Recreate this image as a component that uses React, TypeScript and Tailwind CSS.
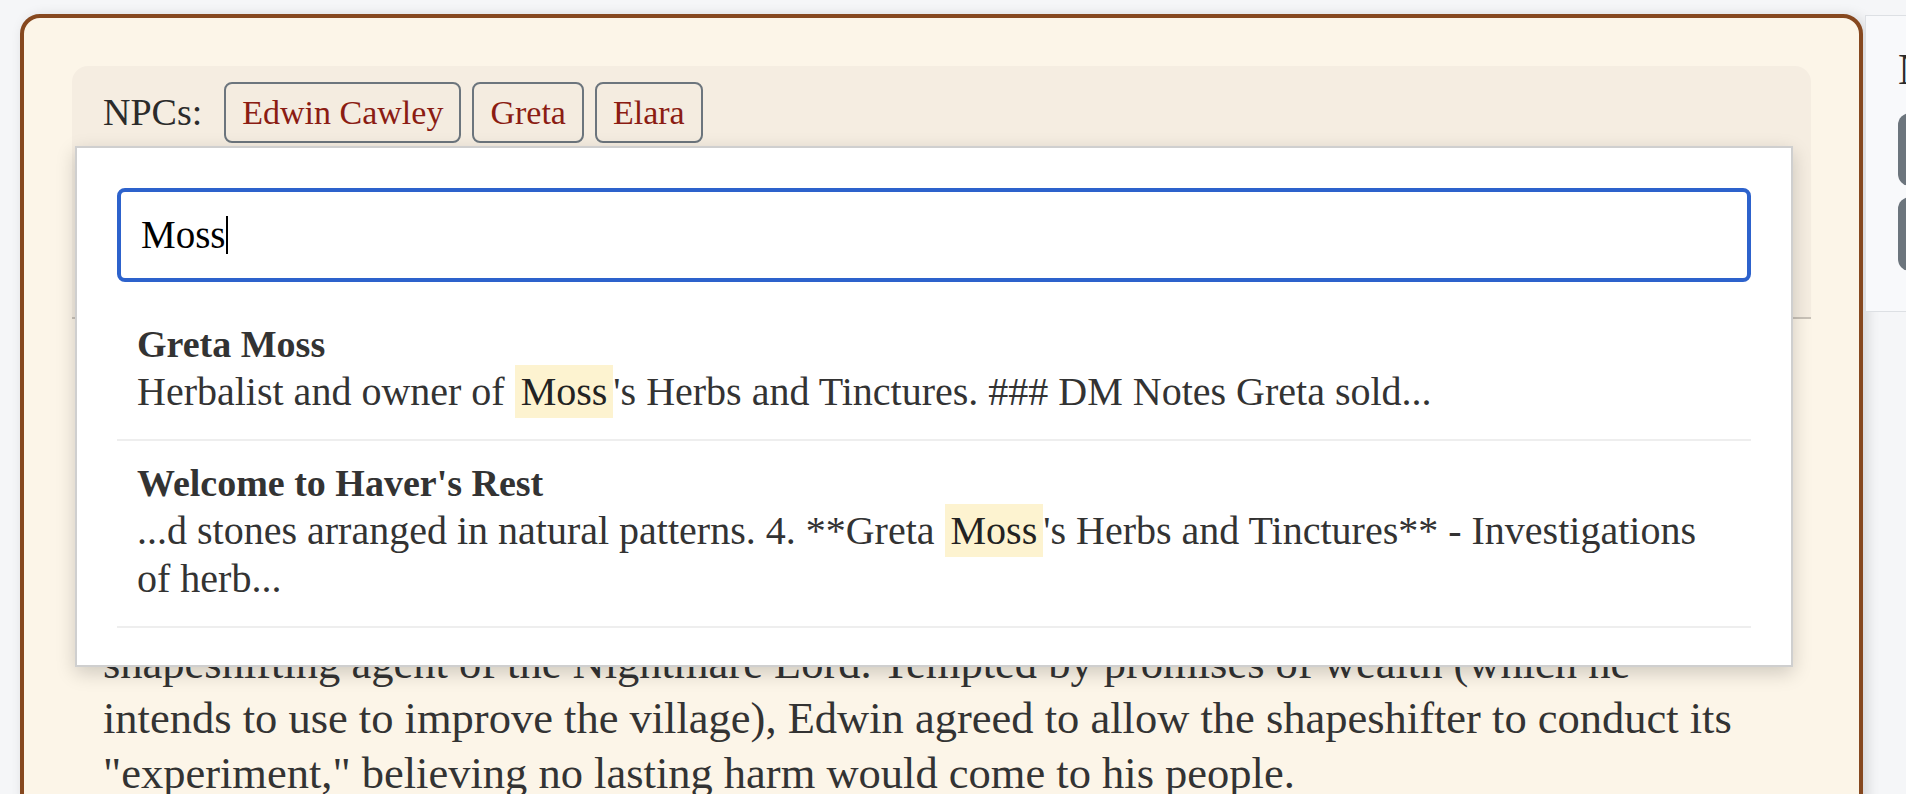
import React from 'react';

interface SearchResult {
  title: string;
  before: string;
  match: string;
  after: string;
}

const npcs = ['Edwin Cawley', 'Greta', 'Elara'];
const locations = ["Haver's Rest", 'The Old Mill', 'Standing Stones'];

const results: SearchResult[] = [
  {
    title: 'Greta Moss',
    before: 'Herbalist and owner of ',
    match: 'Moss',
    after: "'s Herbs and Tinctures. ### DM Notes Greta sold...",
  },
  {
    title: "Welcome to Haver's Rest",
    before: '...d stones arranged in natural patterns. 4. **Greta ',
    match: 'Moss',
    after: "'s Herbs and Tinctures** - Investigations of herb...",
  },
];

function TagButton({ label }: { label: string }) {
  return (
    <button className="h-[61px] rounded-[8px] border-2 border-[#6c757d] bg-[#f4ece0] px-[16px] text-[34px] text-[#8b1c13]">
      {label}
    </button>
  );
}

function SearchDropdown() {
  return (
    <div className="absolute left-[3px] right-[18px] top-[80px] z-10 border-2 border-[#cfcfcf] bg-white px-[40px] pt-[40px] pb-[37px] shadow-[0_6px_18px_rgba(0,0,0,0.18)]">
      {/* search box */}
      <div className="mb-[20px] flex h-[94px] items-center rounded-[8px] border-4 border-[#2d62cc] px-[20px] font-['Liberation_Serif','Times_New_Roman',serif] text-[39px] text-black">
        <span>Moss</span>
        <span className="inline-block h-[38px] w-[2px] bg-black" />
      </div>

      {results.map((r) => (
        <div key={r.title} className="border-b-2 border-[#eeeeee] px-[20px] pt-[18px] pb-[23px] text-[#333333]">
          <div className="text-[38px] leading-[48px] font-bold">{r.title}</div>
          <div className="text-[40px] leading-[48px]">
            {r.before}
            <mark className="bg-[#fdf3d0] px-[6px] py-[4px] text-[#222222]">{r.match}</mark>
            {r.after}
          </div>
        </div>
      ))}
    </div>
  );
}

export default function App() {
  return (
    <div className="h-[794px] w-[1906px] overflow-hidden bg-[#f5f6f8] font-['Liberation_Serif','Times_New_Roman',serif]">
      <div className="flex items-start gap-[2px] pl-[20px] pt-[14px]">
        {/* Main note card */}
        <div className="w-[1843px] shrink-0 rounded-[20px] border-4 border-[#86481f] bg-[#fcf5e8] p-12 shadow-[4px_2px_14px_rgba(0,0,0,0.14)]">
          {/* Links panel */}
          <div className="relative h-[253px] rounded-t-[16px] border-b-2 border-[#c9c2b8] bg-[#f5ede1] px-[31px] pt-[16px]">
            <div className="flex items-center gap-[11px]">
              <span className="mr-[11px] text-[38px] text-[#2b2b2b]">NPCs:</span>
              {npcs.map((n) => (
                <TagButton key={n} label={n} />
              ))}
            </div>
            <div className="mt-[16px] flex items-center gap-[11px]">
              <span className="mr-[11px] text-[38px] text-[#2b2b2b]">Locations:</span>
              {locations.map((l) => (
                <TagButton key={l} label={l} />
              ))}
            </div>

            <SearchDropdown />
          </div>

          {/* Note body */}
          <div className="px-[31px] pt-[30px] text-[#333333]">
            <h3 className="mb-[56px] text-[52px] leading-[66px] font-bold">Edwin Cawley</h3>
            <p className="text-[44.5px] leading-[55px]">
              Edwin Cawley has served as mayor of Haver's Rest for nearly twenty years.
              <br />
              He is well liked, if somewhat vain, and proud of his village's prosperity.
              <br />
              Some months ago he was approached in secret by a stranger, in truth a
              <br />
              shapeshifting agent of the Nightmare Lord. Tempted by promises of wealth (which he
              <br />
              intends to use to improve the village), Edwin agreed to allow the shapeshifter to conduct its
              <br />
              "experiment," believing no lasting harm would come to his people.
            </p>
            <p className="mt-[30px] text-[44.5px] leading-[55px]">
              He now lives in quiet fear of what he has set in motion.
            </p>
          </div>
        </div>

        {/* Sidebar */}
        <div className="mt-[1px] h-[297px] w-[360px] shrink-0 border border-[#dde0e4] bg-[#f8f9fb] pl-[32px] pt-[27px]">
          <h4 className="mb-[17px] text-[44px] leading-[53px] text-[#2b2b2b]">Notes</h4>
          <div className="flex flex-col gap-[11px]">
            <button className="h-[73px] w-[240px] rounded-[12px] bg-[#6c757d] text-[30px] text-white">Edit</button>
            <button className="h-[74px] w-[240px] rounded-[12px] bg-[#6c757d] text-[30px] text-white">Delete</button>
          </div>
        </div>
      </div>
    </div>
  );
}
